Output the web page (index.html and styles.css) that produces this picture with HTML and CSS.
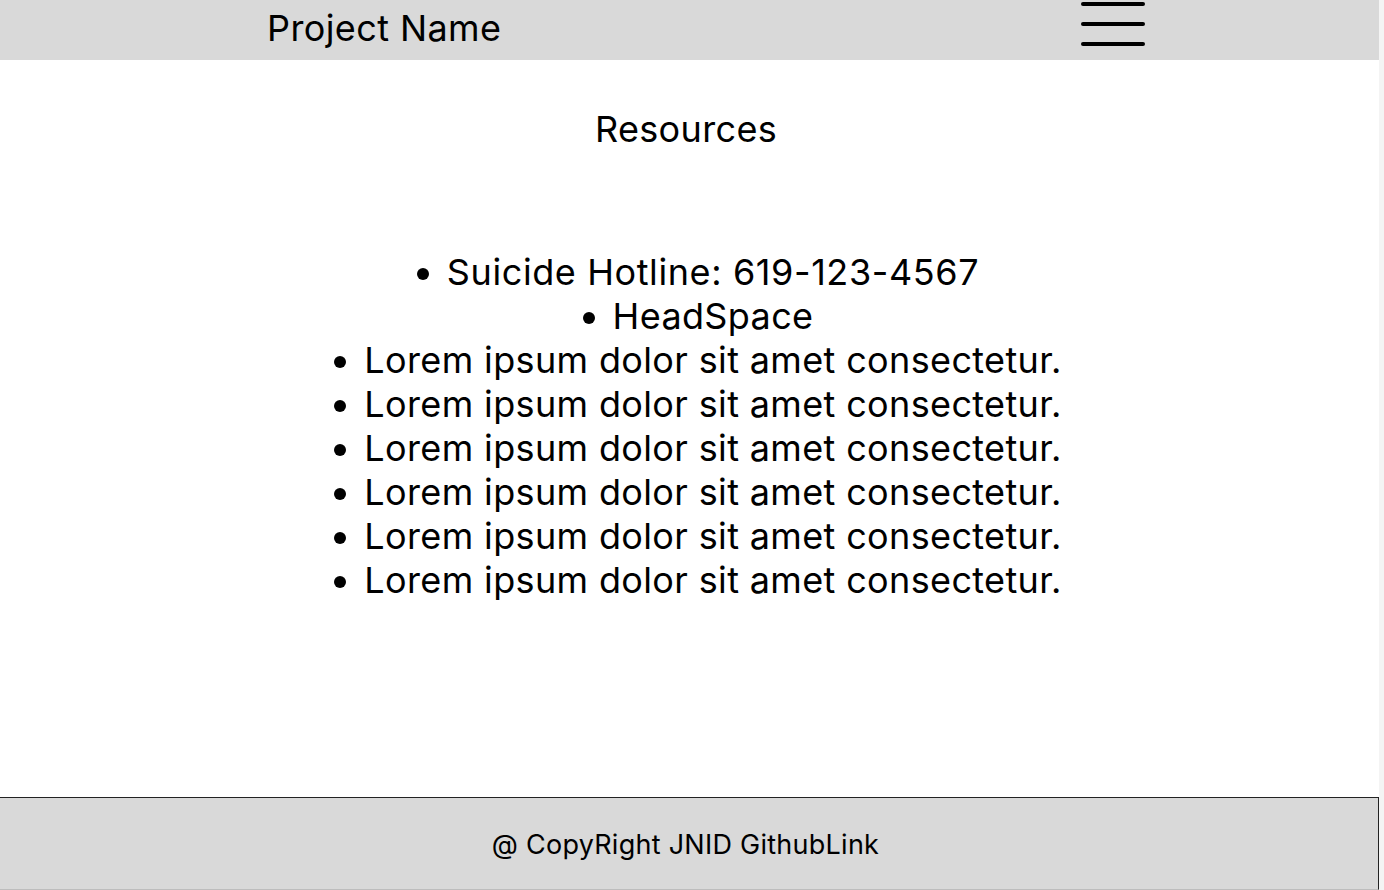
FILE: index.html
```html
<!DOCTYPE html>
<html lang="en">
<head>
<meta charset="utf-8">
<title>Resources</title>
<link rel="stylesheet" href="styles.css">
</head>
<body>
<div class="page">
  <header class="topbar">
    <div class="brand">Project Name</div>
    <button class="menu" aria-label="Menu">
      <svg width="64" height="48" viewBox="0 0 64 48">
        <line x1="2" y1="4" x2="62" y2="4" />
        <line x1="2" y1="24" x2="62" y2="24" />
        <line x1="2" y1="44" x2="62" y2="44" />
      </svg>
    </button>
  </header>
  <main class="content">
    <h1 class="title">Resources</h1>
    <ul class="resources">
      <li>Suicide Hotline: 619-123-4567</li>
      <li>HeadSpace</li>
      <li>Lorem ipsum dolor sit amet consectetur.</li>
      <li>Lorem ipsum dolor sit amet consectetur.</li>
      <li>Lorem ipsum dolor sit amet consectetur.</li>
      <li>Lorem ipsum dolor sit amet consectetur.</li>
      <li>Lorem ipsum dolor sit amet consectetur.</li>
      <li>Lorem ipsum dolor sit amet consectetur.</li>
    </ul>
  </main>
  <footer class="footer">@ CopyRight JNID GithubLink</footer>
</div>
</body>
</html>
```

FILE: styles.css
```css
html {
  background: #f4f4f4;
}
body {
  margin: 0;
  font-family: Inter, "Noto Sans", sans-serif;
  color: #000;
}
.page {
  width: 1379px;
  height: 890px;
  background: #fff;
  display: flex;
  flex-direction: column;
}
.topbar {
  height: 60px;
  background: #d9d9d9;
  display: flex;
  align-items: flex-start;
  justify-content: space-between;
  padding-left: 267px;
  padding-right: 234px;
}
.brand {
  font-size: 36px;
  letter-spacing: 0.4px;
  line-height: 56px;
}
.menu {
  border: 0;
  background: none;
  padding: 0;
  height: 48px;
  display: block;
}
.menu svg {
  display: block;
}
.menu line {
  stroke: #000;
  stroke-width: 4;
  stroke-linecap: round;
}
.content {
  flex: 1;
  padding-top: 47px;
}
.title {
  margin: 0;
  padding-right: 7px;
  font-weight: 400;
  font-size: 36px;
  letter-spacing: 0.35px;
  line-height: 44px;
  text-align: center;
}
.resources {
  margin: 99px 0 0;
  padding: 0 0 0 47px;
  font-size: 36px;
  letter-spacing: 0.36px;
  line-height: 44px;
  text-align: center;
}
.resources li {
  width: fit-content;
  margin: 0 auto;
}
.resources li:first-child {
  letter-spacing: 0.6px;
}
.footer {
  height: 93px;
  box-sizing: border-box;
  background: #d9d9d9;
  border-top: 1px solid #222;
  border-right: 1px solid #222;
  border-bottom: 1px solid #bdbdbd;
  display: flex;
  align-items: center;
  justify-content: center;
  padding: 2px 7px 0 0;
  font-size: 27px;
  letter-spacing: 0.26px;
}
```
